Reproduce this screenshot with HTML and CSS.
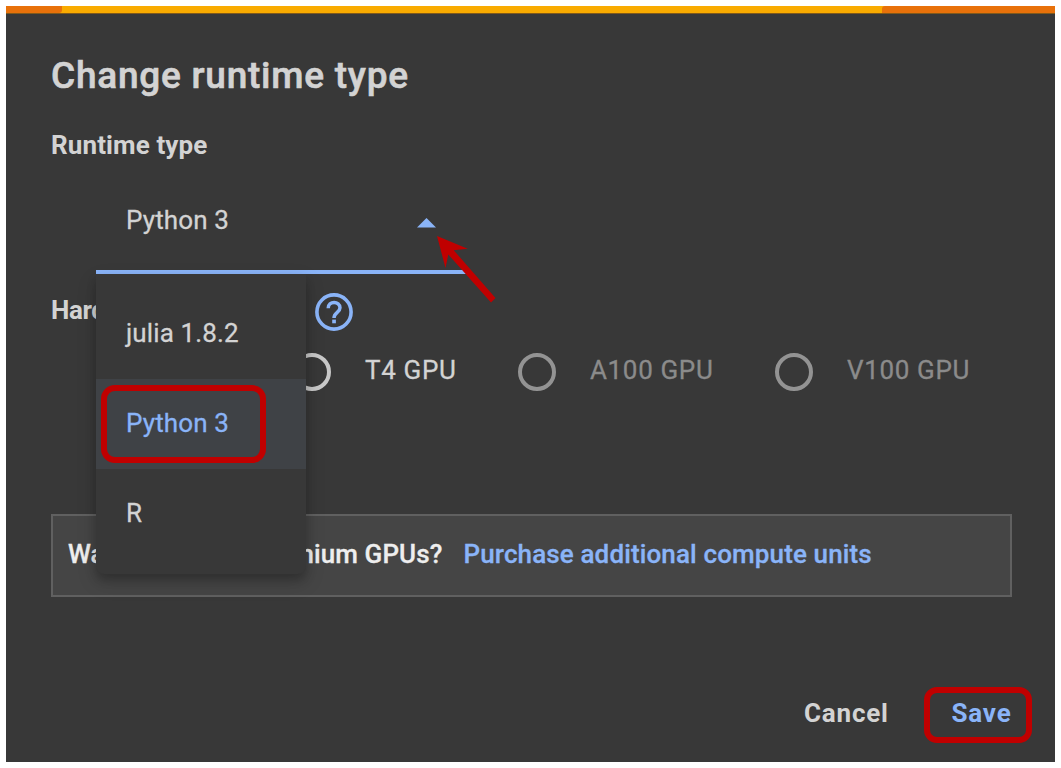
FILE: index.html
```html
<!DOCTYPE html>
<html lang="en">
<head>
<meta charset="utf-8">
<title>Change runtime type</title>
<link rel="stylesheet" href="styles.css">
</head>
<body>
<main class="dialog">
  <div class="progress"><span class="progress-start"></span><span class="progress-mid"></span><span class="progress-end"></span></div>
  <div class="content">
    <h1 class="title"><span>Change runtime type</span></h1>
    <h2 class="label"><span>Runtime type</span></h2>
    <div class="select">
      <span class="select-value">Python 3</span>
      <svg class="caret" width="19" height="10" viewBox="0 0 19 10"><path d="M0 9.500 9.500 0 19 9.500z" fill="#8ab4f8"/></svg>
      <ul class="menu">
        <li class="option"><span class="julia">julia 1.8.2</span></li>
        <li class="option selected"><span>Python 3</span><i class="mark mark-option"></i></li>
        <li class="option"><span>R</span></li>
      </ul>
      <svg class="arrow" width="62" height="70" viewBox="0 0 62 70"><path d="M1 1 31.700 13.700 17.700 15.200 59.500 63 55 67.500 12.300 19.500 9.500 33z" fill="#c00000"/></svg>
    </div>
    <div class="hardware">
      <h2 class="label hw-label">Hardware accelerator</h2>
      <svg class="help" width="38" height="38" viewBox="0 0 38 38" fill="none" stroke="#8ab4f8"><circle cx="19" cy="19" r="17.100" stroke-width="3.600"/><path d="M13.200 15.200C13.200 7.500 25 7.800 25 14.800C25 19.500 19 19.300 19 25" stroke-width="3.500"/><path d="M17.200 26.600h3.700v3.700h-3.700z" fill="#8ab4f8" stroke="none"/></svg>
    </div>
    <div class="radios">
      <label class="radio t4"><i class="circle"></i><span>T4 GPU</span></label>
      <label class="radio off"><i class="circle"></i><span>A100 GPU</span></label>
      <label class="radio off"><i class="circle"></i><span>V100 GPU</span></label>
    </div>
    <div class="notice"><span class="question">Want access to premium GPUs?</span><a class="link">Purchase additional compute units</a></div>
    <div class="actions"><span class="cancel">Cancel</span><span class="save"><span>Save</span></span></div>
  </div>
</main>
</body>
</html>
```
FILE: styles.css
```css
* { box-sizing: border-box; }
body { margin: 0; padding: 6px; background: #fff; font: 400 26px/30px Roboto, sans-serif; letter-spacing: .13px; color: #d3d3d3; -webkit-text-stroke: .3px currentColor; }
.dialog { width: 1049px; height: 756px; background: #383838; overflow: hidden; }
.progress { display: flex; height: 8px; border-bottom: 1px solid #80591b; background: #f9ab00; }
.progress-start { width: 56px; background: #e8710a; border-radius: 0 0 3px 0; }
.progress-mid { flex: 1; }
.progress-end { width: 173px; background: #e8710a; border-radius: 3px 0 0 0; }
.content { padding: 40px 43px 0 45px; }
.title { margin: 0; font-size: 37px; line-height: 44px; font-weight: 500; letter-spacing: .75px; -webkit-text-stroke-width: .6px; }
.label { margin: 32px 0 0; font-size: 26px; line-height: 30px; font-weight: 700; letter-spacing: .12px; -webkit-text-stroke-width: 0; }
.select { position: relative; display: flex; justify-content: space-between; align-items: flex-start; width: 370px; height: 99px; margin: 15px 0 0 45px; padding: 30px 30px 0 30px; border-bottom: 4px solid #8ab4f8; }
.caret { margin-top: 13px; }
.menu { position: absolute; z-index: 2; left: 0; top: 99px; width: 210px; height: 300px; margin: 0; padding: 15px 0 0; list-style: none; background: #383838; border-radius: 0 0 8px 8px; box-shadow: 0 6px 10px rgba(0,0,0,.2), 0 8px 20px rgba(0,0,0,.15); }
.option { position: relative; display: flex; align-items: center; height: 90px; padding: 0 0 2px 30px; }
.selected { background: #3f4246; color: #8ab4f8; }
.mark { position: absolute; border: 6px solid #c00000; border-radius: 14px; }
.mark-option { left: 5px; top: 6px; width: 165px; height: 78px; }
.arrow { position: absolute; z-index: 3; left: 340px; top: 60px; }
.hardware { display: flex; align-items: center; height: 38px; margin-top: 18px; }
.help { position: relative; top: .5px; }
.hw-label { margin: -3px 18px 0 0; width: 246px; letter-spacing: -.4px; white-space: nowrap; }
.radios { display: grid; grid-template-columns: 225px 257px 200px; margin: 22px 0 0 242px; }
.radio { display: flex; align-items: center; gap: 34px; height: 39px; letter-spacing: .65px; white-space: nowrap; }
.radio span { margin-top: -4px; }
.circle { width: 38px; height: 38px; border: 4px solid #c8c8c8; border-radius: 50%; margin-top: 1px; }
.off { color: #8b8b8b; }
.off .circle { border-color: #939393; }
.notice { display: flex; align-items: center; height: 83px; margin-top: 123px; padding: 0 15px 4px; background: #454545; border: 2px solid #606060; font-weight: 500; white-space: nowrap; }
.question { width: 395.500px; letter-spacing: .1px; color: #eee; }
.link { color: #8ab4f8; }
.actions { display: flex; justify-content: flex-end; align-items: center; height: 56px; margin: 90px -20px 0 0; font-weight: 700; letter-spacing: .8px; -webkit-text-stroke-width: 0; }
.cancel { width: 120px; margin-top: -4px; }
.save { display: flex; justify-content: center; width: 108px; height: 56px; padding: 7px 0 0 7px; border: 6px solid #c00000; border-radius: 13px; color: #8ab4f8; }
.save span { margin-top: -2px; }
```
